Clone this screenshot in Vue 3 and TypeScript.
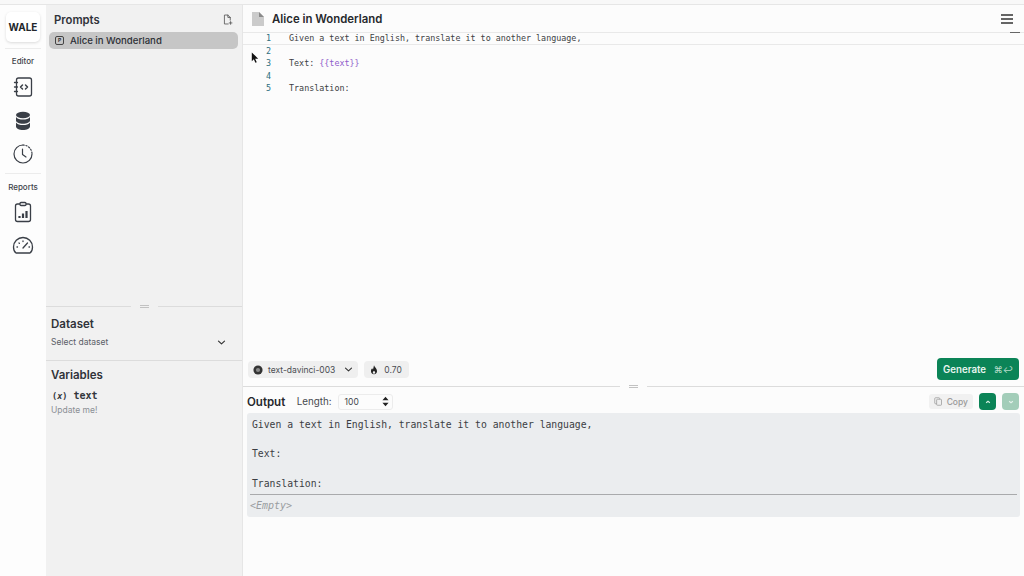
<script setup lang="ts">
const lines: { n: number; parts: { t: string; v?: boolean }[] }[] = [
  { n: 1, parts: [{ t: 'Given a text in English, translate it to another language,' }] },
  { n: 2, parts: [] },
  { n: 3, parts: [{ t: 'Text: ' }, { t: '{{text}}', v: true }] },
  { n: 4, parts: [] },
  { n: 5, parts: [{ t: 'Translation:' }] },
]
const output = ['Given a text in English, translate it to another language,', '', 'Text:', '', 'Translation:']
</script>

<template>
  <div class="app">
    <nav class="rail">
      <div class="logo">WALE</div>
      <div class="rail-rule"></div>
      <div class="rail-label">Editor</div>
      <button class="rail-btn">
        <svg viewBox="0 0 24 24" width="24" height="24" fill="none" stroke="#3a3f47" stroke-width="1.300" stroke-linecap="round" stroke-linejoin="round">
          <rect x="5.500" y="3" width="15" height="18" rx="2" />
          <path d="M3.500 7.500h3M3.500 12h3M3.500 16.500h3" />
          <path d="M11.500 10l-2 2 2 2M14.500 10l2 2-2 2" stroke-width="1.500" />
        </svg>
      </button>
      <button class="rail-btn">
        <svg viewBox="0 -1 24 24" width="24" height="24" fill="#3a3f47">
          <ellipse cx="12" cy="6" rx="7" ry="3.200" />
          <path d="M5 8c1.300 1.800 3.900 2.600 7 2.600S17.700 9.800 19 8v3.500c0 1.800-3.100 3.200-7 3.200s-7-1.400-7-3.200z" />
          <path d="M5 13.500c1.300 1.800 3.900 2.600 7 2.600s5.700-.8 7-2.600V17.500c0 1.900-3.100 3.500-7 3.500s-7-1.600-7-3.500z" />
        </svg>
      </button>
      <button class="rail-btn">
        <svg viewBox="0 0 24 24" width="24" height="24" fill="none" stroke="#3a3f47" stroke-width="1.200" stroke-linecap="round" stroke-linejoin="round">
          <path d="M12 3a9 9 0 1 0 9 9" />
          <path d="M12 3a9 9 0 0 1 9 9" stroke-dasharray="1.200 1.800" />
          <path d="M11.500 7v5.500l3.500 2.500" />
        </svg>
      </button>
      <div class="rail-rule second"></div>
      <div class="rail-label low">Reports</div>
      <button class="rail-btn">
        <svg viewBox="0 0 24 24" width="24" height="24" fill="none" stroke="#3a3f47" stroke-width="1.300" stroke-linejoin="round">
          <rect x="4.500" y="4" width="15" height="17.500" rx="2" />
          <rect x="9" y="2.500" width="6" height="3" rx="1" fill="#fff" />
          <path d="M8.500 18v-2M12 18v-4.500M15.500 18v-7" stroke-width="2.200" />
        </svg>
      </button>
      <button class="rail-btn">
        <svg viewBox="0 0 24 24" width="24" height="24" fill="none" stroke="#3a3f47" stroke-width="1.300" stroke-linecap="round" stroke-linejoin="round">
          <path d="M5 19h14c1.500-1 2.500-3 2.500-6A9.500 9.500 0 0 0 2.500 13c0 3 1 5 2.500 6z" />
          <path d="M12 14l4.500-5" />
          <path d="M6 13h.5M8 9l.4.4M12 7v.5M18 13h.5" />
        </svg>
      </button>
    </nav>

    <aside class="panel">
      <section class="prompts">
        <header class="prompts-head">
          <h2 class="prompts-title">Prompts</h2>
          <svg viewBox="0 0 16 16" width="11" height="11" fill="none" stroke="#555" stroke-width="1.200" stroke-linecap="round" stroke-linejoin="round">
            <path d="M9 14.500H3.500V1.500H8.500L12 5v4" />
            <path d="M8.500 1.500V5H12" />
            <path d="M12.500 11v4M10.500 13h4" />
          </svg>
        </header>
        <div class="prompt-item">
          <span class="prompt-badge">P</span>
          <span>Alice in Wonderland</span>
        </div>
      </section>
      <div class="split"><i></i><b></b><i></i></div>
      <section class="dataset">
        <h3 class="side-title">Dataset</h3>
        <div class="select-row">
          <span>Select dataset</span>
          <svg viewBox="0 0 12 12" width="9" height="9" fill="none" stroke="#333" stroke-width="1.600" stroke-linecap="round" stroke-linejoin="round"><path d="M2 4.200l4 3.600 4-3.600" /></svg>
        </div>
      </section>
      <section class="variables">
        <h3 class="side-title">Variables</h3>
        <div class="var-name"><span class="var-x">(<em>x</em>)</span><span>text</span></div>
        <div class="var-hint">Update me!</div>
      </section>
    </aside>

    <main class="main">
      <header class="title-bar">
        <svg class="doc-icon" viewBox="0 0 12 14" width="12" height="14"><path d="M0 0h7l5 5v9H0z" fill="#cbcbcb" /><path d="M7 0v5h5z" fill="#8a8a8a" /></svg>
        <h1 class="title">Alice in Wonderland</h1>
        <svg class="menu" viewBox="0 0 12 10" width="12" height="10" fill="none" stroke="#333" stroke-width="1.300"><path d="M0 1h12M0 5h12M0 9h12" /></svg>
      </header>

      <section class="editor">
        <div v-for="l in lines" :key="l.n" class="code-line" :class="{ active: l.n === 1 }">
          <span class="gutter">{{ l.n }}</span>
          <span class="code"><span v-for="(p, i) in l.parts" :key="i" :class="{ tvar: p.v }">{{ p.t }}</span></span>
        </div>
        <span class="scroll-mark"></span>
        <svg class="cursor" viewBox="0 0 10 14" width="8" height="12"><path d="M1 0v11l2.500-2.300L5.500 13l1.700-.8-2-4.200H9z" fill="#111" /></svg>
      </section>

      <div class="toolbar">
        <div class="chip model">
          <svg viewBox="0 0 12 12" width="10" height="10"><circle cx="6" cy="6" r="5.500" fill="#333" /><circle cx="6" cy="6" r="2.500" fill="#888" /></svg>
          <span>text-davinci-003</span>
          <svg class="chev" viewBox="0 0 12 12" width="9" height="9" fill="none" stroke="#333" stroke-width="1.500" stroke-linecap="round" stroke-linejoin="round"><path d="M2 4.200l4 3.600 4-3.600" /></svg>
        </div>
        <div class="chip temp">
          <svg viewBox="0 0 12 14" width="8" height="10" fill="#222"><path d="M6 0c.5 2.500 4.500 4.500 4.500 8.500A4.500 4.500 0 0 1 6 13.500 4.500 4.500 0 0 1 1.500 8.500C1.500 6.500 2.500 5.500 3.200 4.500c.4 1 .8 1.500 1.300 1.800C5 4.500 5.500 2 6 0zM6 8c-1 1-1.800 1.600-1.800 2.800a1.800 1.800 0 0 0 3.600 0C7.800 9.600 7 9 6 8z" fill-rule="evenodd" /></svg>
          <span>0.70</span>
        </div>
        <button class="generate"><span>Generate</span><span class="kbd">⌘↩</span></button>
      </div>

      <div class="split main-split"><i></i><b></b><i></i></div>

      <div class="output-bar">
        <strong class="output-title">Output</strong>
        <label class="len-label">Length:</label>
        <div class="len-box">
          <span>100</span>
          <svg viewBox="0 0 8 12" width="7" height="11" fill="#222"><path d="M4 .5L7.500 4.500H.5zM4 11.500L.5 7.500h7z" /></svg>
        </div>
        <div class="spacer"></div>
        <div class="copy">
          <svg viewBox="0 0 12 12" width="9" height="9" fill="none" stroke="#9a9a9a" stroke-width="1"><rect x="1" y="1" width="6.500" height="8" rx="1" /><rect x="3.500" y="3" width="6.500" height="8" rx="1" fill="#efefef" /></svg>
          <span>Copy</span>
        </div>
        <button class="nav-btn">
          <svg viewBox="0 0 8 8" width="6" height="6" fill="none" stroke="#d9efe5" stroke-width="1.400"><path d="M1.500 5l2.500-2 2.500 2" /></svg>
        </button>
        <button class="nav-btn dim">
          <svg viewBox="0 0 8 8" width="6" height="6" fill="none" stroke="#e6f2ec" stroke-width="1.400"><path d="M1.500 3l2.500 2 2.500-2" /></svg>
        </button>
      </div>

      <section class="output">
        <div class="output-text">
          <div v-for="(o, i) in output" :key="i" class="out-line">{{ o }}</div>
        </div>
        <div class="empty">&lt;Empty&gt;</div>
      </section>
    </main>
  </div>
</template>

<style>
html, body { margin: 0; padding: 0; background: #f8f8f8; }
</style>

<style scoped>
.app {
  width: 1024px;
  height: 572px;
  margin-top: 4px;
  box-sizing: border-box;
  display: flex;
  overflow: hidden;
  border-top: 1px solid #e6e6e6;
  font-family: Inter, "Liberation Sans", sans-serif;
  color: #26282c;
  background: #fcfcfc;
}
button { border: 0; padding: 0; background: none; font-family: inherit; }

.rail {
  width: 46px;
  flex: none;
  display: flex;
  flex-direction: column;
  align-items: center;
  background: #fdfdfd;
}
.logo {
  width: 34px;
  height: 30px;
  margin-top: 7px;
  display: flex;
  align-items: center;
  justify-content: center;
  font-size: 10px;
  font-weight: 700;
  color: #23262b;
  background: #fff;
  border-radius: 5px;
  box-shadow: 0 1px 3px rgba(0, 0, 0, 0.14);
}
.rail-rule { width: 36px; height: 1px; background: #ececec; margin-top: 6px; }
.rail-rule.second { margin-top: 2px; }
.rail-label { font-size: 8px; font-weight: 500; color: #3f444b; margin-top: 7px; line-height: 10px; }
.rail-label.low { margin-top: 8px; }
.rail-btn { width: 34px; height: 33.500px; flex: none; display: flex; align-items: center; justify-content: center; }
.rail-label + .rail-btn { margin-top: 4px; }

.panel {
  width: 197px;
  flex: none;
  display: flex;
  flex-direction: column;
  background: #f1f1f1;
  border-right: 1px solid #e6e6e6;
  box-sizing: border-box;
}
.prompts { height: 296px; flex: none; }
.prompts-head {
  display: flex;
  align-items: center;
  justify-content: space-between;
  padding: 3px 9px 1px 8px;
  height: 23px;
  box-sizing: content-box;
}
.prompts-title { margin: 0; font-size: 11.300px; font-weight: 600; color: #30333a; }
.prompt-item {
  margin: 0 4px 0 3px;
  height: 17px;
  display: flex;
  align-items: center;
  gap: 6px;
  padding-left: 6px;
  background: #c6c6c6;
  border-radius: 5px;
  font-size: 9.600px;
  font-weight: 500;
  color: #2c2f35;
}
.prompt-badge {
  width: 7px;
  height: 7px;
  border: 1px solid #444;
  border-radius: 2px;
  font-size: 5px;
  line-height: 7px;
  text-align: center;
  font-weight: 700;
}
.split { display: flex; align-items: center; height: 11px; flex: none; }
.split i { flex: 1; height: 1px; background: #dcdcdc; }
.split b { width: 9px; height: 3px; margin: 0 9px; border-top: 1px solid #c2c2c2; border-bottom: 1px solid #c2c2c2; box-sizing: border-box; }

.dataset { height: 49px; box-sizing: border-box; padding: 5px 5px 0; border-bottom: 1px solid #dcdcdc; flex: none; }
.side-title { margin: 0; font-size: 11.500px; font-weight: 600; color: #30333a; line-height: 14px; }
.select-row {
  display: flex;
  align-items: center;
  justify-content: space-between;
  font-size: 8.500px;
  color: #5b6068;
  margin-top: 5px;
  padding-right: 11px;
  line-height: 12px;
}
.variables { padding: 7px 5px; }
.var-name {
  display: flex;
  align-items: baseline;
  gap: 6px;
  font-family: "DejaVu Sans Mono", monospace;
  font-size: 10px;
  font-weight: 700;
  color: #33363c;
  margin-top: 8px;
  line-height: 12px;
  padding-left: 1px;
}
.var-x { font-size: 8.500px; }
.var-hint { font-size: 8.500px; color: #8b8f95; margin-top: 2px; line-height: 12px; }

.main { flex: 1; min-width: 0; display: flex; flex-direction: column; }
.title-bar {
  height: 27px;
  flex: none;
  display: flex;
  align-items: center;
  gap: 8px;
  padding: 0 11px 0 9px;
}
.title { margin: 0; flex: 1; font-size: 11.400px; font-weight: 600; color: #26282c; }

.editor { position: relative; height: 326px; flex: none; font-family: "DejaVu Sans Mono", monospace; font-size: 8.400px; }
.code-line { display: flex; height: 12.600px; line-height: 12.600px; }
.code-line.active { box-shadow: inset 0 1px 0 #e9e9e9, inset 0 -1px 0 #e9e9e9; }
.gutter { width: 46px; flex: none; padding-right: 18px; box-sizing: border-box; text-align: right; color: #2f6f7e; }
.code { color: #3c3f44; white-space: pre; }
.tvar { color: #8f5ccb; }
.scroll-mark { position: absolute; right: 4px; top: 0; width: 10px; height: 1px; background: #666; }
.cursor { position: absolute; left: 8px; top: 20px; }

.toolbar { height: 22px; flex: none; display: flex; align-items: center; gap: 6px; padding: 0 5px; }
.chip {
  height: 17px;
  margin-top: 1px;
  display: flex;
  align-items: center;
  gap: 5px;
  padding: 0 5px;
  border-radius: 4px;
  background: #efefef;
  font-size: 8.500px;
  color: #4a4d52;
}
.chip .chev { margin-left: 4px; }
.temp { gap: 6px; padding: 0 7px 0 6px; }
.generate {
  margin-left: auto;
  height: 22px;
  width: 82px;
  box-sizing: border-box;
  padding: 0 6px;
  display: flex;
  align-items: center;
  justify-content: space-between;
  background: #0b8457;
  border-radius: 4px;
  color: #e9f5ef;
  font-size: 9.700px;
  font-weight: 600;
}
.kbd { font-size: 9px; font-weight: 400; color: #b8dccb; }

.main-split { margin-top: 1.500px; height: 9px; }
.output-bar { height: 22px; flex: none; display: flex; align-items: center; padding: 0 5px 0 4px; }
.output-title { font-size: 11.500px; font-weight: 600; color: #26282c; }
.len-label { font-size: 9.800px; color: #46494f; margin-left: 11.500px; }
.len-box {
  width: 55px;
  height: 16px;
  box-sizing: border-box;
  margin-left: 6px;
  display: flex;
  align-items: center;
  justify-content: space-between;
  padding: 0 3px 0 6px;
  border: 1px solid #ececec;
  border-radius: 3px;
  font-size: 8.500px;
  color: #44474c;
}
.spacer { flex: 1; }
.copy {
  display: flex;
  align-items: center;
  gap: 4px;
  height: 15px;
  padding: 0 5px;
  background: #f1f1f1;
  border-radius: 3px;
  font-size: 8.500px;
  font-weight: 500;
  color: #9a9a9a;
}
.nav-btn {
  width: 17px;
  height: 17px;
  margin-left: 6px;
  background: #0b8457;
  border-radius: 4px;
  display: flex;
  align-items: center;
  justify-content: center;
}
.nav-btn.dim { background: #a3cdb9; }

.output {
  margin: 0.500px 4px 0;
  height: 104px;
  flex: none;
  background: #ebedef;
  border-radius: 3px;
  font-family: "DejaVu Sans Mono", monospace;
  font-size: 9.750px;
  color: #3b3e43;
  box-sizing: border-box;
  padding-top: 5px;
}
.out-line { height: 14.700px; line-height: 14.700px; padding-left: 2px; white-space: pre; }
.output-text { padding-bottom: 3px; border-bottom: 1px solid #a9aaac; margin: 0 3px; }
.empty { padding: 3px 0 0 5px; margin-left: -2px; font-style: italic; font-size: 10px; color: #9a9da1; line-height: 15px; }
</style>
